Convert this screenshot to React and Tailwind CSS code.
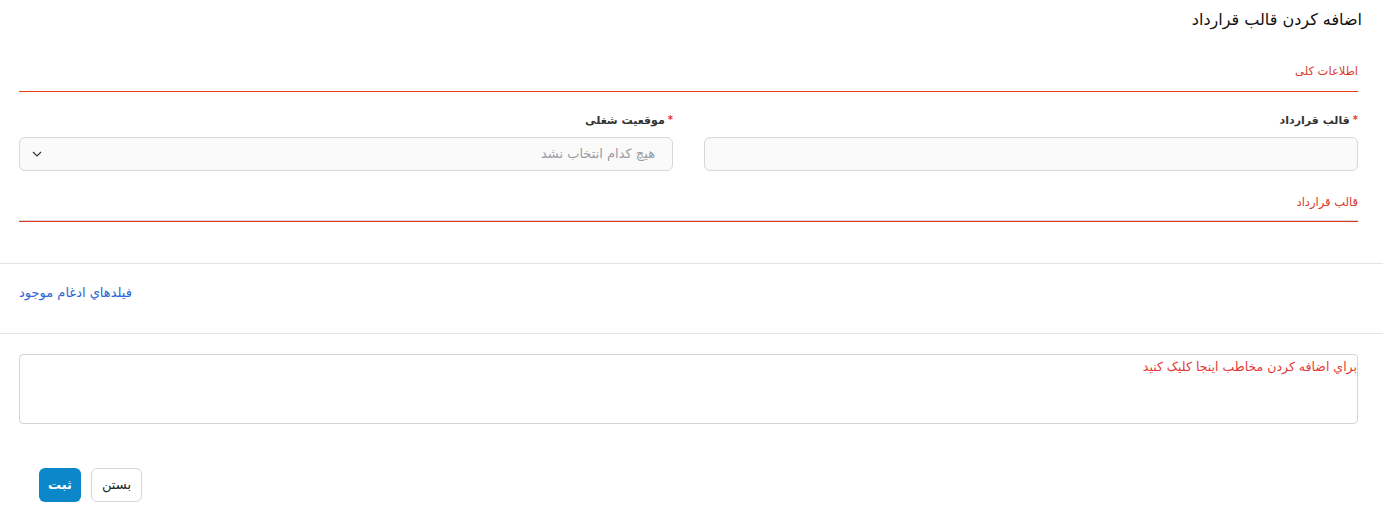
import React from 'react';

function Field({ label, children }) {
  return (
    <div className="flex flex-col">
      <label className="flex items-center h-[20px] text-[11px] font-bold text-[#333]">
        <span className="text-[#e53935] text-[10px] ml-[3px] -mt-[4px]">*</span>
        {label}
      </label>
      <div className="mt-[6px]">{children}</div>
    </div>
  );
}

export default function App() {
  return (
    <div dir="rtl" className="bg-white w-[1386px] min-h-[527px] text-[#222] font-['DejaVu_Sans','Noto_Sans',sans-serif]">
      {/* title */}
      <div className="pr-[24px] pt-[8px] h-[44px] text-[16px] text-[#111]">اضافه کردن قالب قرارداد</div>

      <div className="pr-[28px] pl-[19px]">
        {/* general info */}
        <div className="mt-[19px] text-[11.5px] text-[#d9382b] h-[20px]">اطلاعات کلی</div>
        <div className="mt-[8px] h-[1px] bg-[#f03a1c]" />

        <div className="grid grid-cols-2 gap-[31px] mt-[19px]">
          <Field label="قالب قرارداد">
            <input className="w-full h-[34px] rounded-[6px] border border-[#d6d6dc] bg-[#fafafa] outline-none" />
          </Field>
          <Field label="موقعیت شغلی">
            <div className="flex items-center justify-between w-full h-[34px] rounded-[6px] border border-[#d6d6dc] bg-[#fafafa] pr-[17px] pl-[12px]">
              <span className="text-[13px] text-[#9a9aa2]">هیچ کدام انتخاب نشد</span>
              <svg width="10" height="6" viewBox="0 0 10 6" fill="none" stroke="#333" strokeWidth="1.2">
                <path d="M1 1l4 4 4-4" />
              </svg>
            </div>
          </Field>
        </div>

        {/* contract template */}
        <div className="mt-[23px] text-[11.5px] text-[#d9382b] h-[20px]">قالب قرارداد</div>
        <div className="mt-[6px] h-[1px] bg-[#d8d8d8]" />
        <div className="h-[1px] bg-[#e3341f]" />
      </div>

      <div className="mt-[41px] mr-[3px] h-[1px] bg-[#e4e4e4]" />
      <div dir="ltr" className="h-[69px] pt-[16px] pl-[19px]">
        <a className="text-[13px] text-[#2a66d6] cursor-pointer" dir="rtl">فیلدهاي ادغام موجود</a>
      </div>
      <div className="mr-[3px] h-[1px] bg-[#e4e4e4]" />

      <div className="pr-[28px] pl-[19px] mt-[20px]">
        <div className="h-[70px] rounded-[4px] border border-[#d4d4d4] leading-[22px]">
          <span className="text-[12.5px] text-[#e53935]">براي اضافه كردن مخاطب اينجا كليک كنيد</span>
        </div>
      </div>

      <div dir="ltr" className="flex gap-[10px] pl-[39px] mt-[44px]">
        <button className="h-[34px] w-[42px] rounded-[6px] bg-[#0a86c9] text-white text-[13px] font-bold">ثبت</button>
        <button className="h-[34px] w-[51px] rounded-[6px] border border-[#d6d6dc] bg-white text-[13px] text-[#222]">بستن</button>
      </div>
    </div>
  );
}
